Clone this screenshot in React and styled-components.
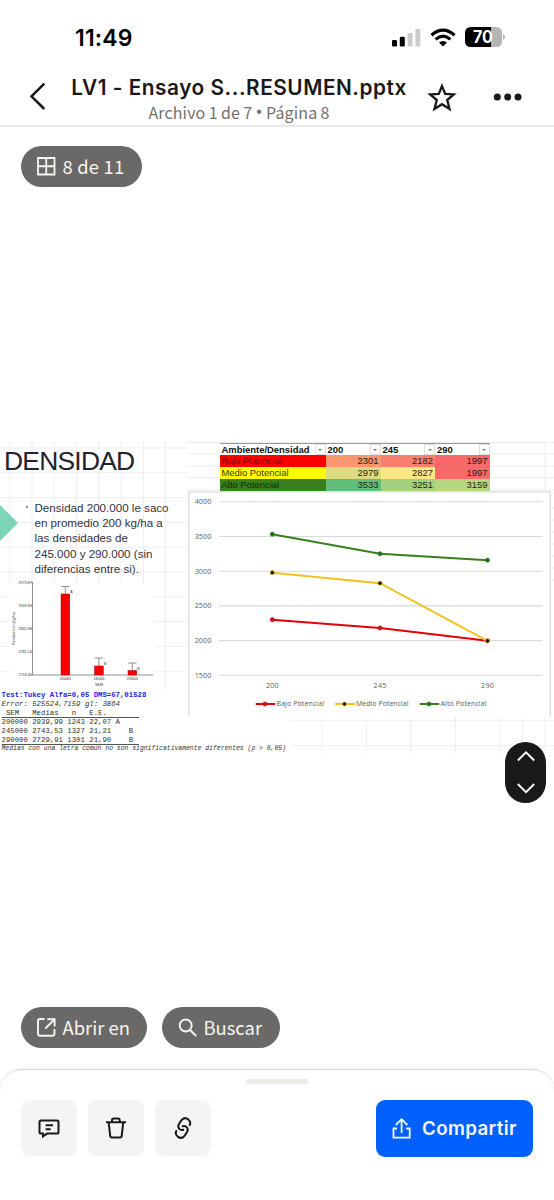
import styled, { createGlobalStyle } from 'styled-components';

const GlobalStyle = createGlobalStyle`
  * {
    box-sizing: border-box;
  }

  body {
    margin: 0;
    background: #fff;
    color: #1a1918;
    font-family: 'Inter', 'Liberation Sans', sans-serif;
  }
`;

const Screen = styled.div`
  position: relative;
  display: flex;
  flex-direction: column;
  width: 554px;
  height: 1200px;
  overflow: hidden;
  background: #fff;
`;

const StatusBar = styled.div`
  display: flex;
  align-items: center;
  justify-content: space-between;
  height: 74px;
  padding: 0 49px 0 75px;
`;

const Clock = styled.span`
  padding-top: 2px;
  font-size: 23px;
  font-weight: 600;
  letter-spacing: 0.15px;
  line-height: 30px;
  color: #000;
`;

const StatusIcons = styled.div`
  display: flex;
  align-items: center;
  gap: 9px;
`;

const NavBar = styled.header`
  display: flex;
  height: 53px;
  border-bottom: 2px solid #e9e9e9;
`;

const BackButton = styled.div`
  width: 70px;
  padding: 8px 0 0 29px;
`;

const TitleBlock = styled.div`
  width: 338px;
  text-align: center;
  white-space: nowrap;
`;

const FileName = styled.div`
  height: 27px;
  font-size: 20.8px;
  font-weight: 600;
  letter-spacing: 0.53px;
  line-height: 28px;
`;

const FileInfo = styled.div`
  display: flex;
  justify-content: center;
  gap: 4px;
  height: 24px;
  font-family: 'Noto Sans CJK SC', sans-serif;
  font-size: 16px;
  letter-spacing: 0.15px;
  word-spacing: -0.5px;
  line-height: 22px;
  color: #73716f;
`;

const Separator = styled.span`
  font-family: 'Liberation Sans', sans-serif;
  letter-spacing: 0;
`;

const NavActions = styled.div`
  display: flex;
  gap: 36px;
  padding: 8px 0 0 19px;
`;

const Viewer = styled.main`
  display: flex;
  flex-direction: column;
  height: 942px;
`;

const PillRow = styled.div`
  display: flex;
  gap: 15px;
  padding-left: 21px;
  margin-top: ${({ $top }) => $top};
`;

const Pill = styled.div`
  display: flex;
  align-items: center;
  width: ${({ $width }) => $width};
  height: 41px;
  padding-left: 16px;
  gap: 6.5px;
  border-radius: 21px;
  background: #6a6967;
  color: #f7f5f2;
  font-family: 'Noto Sans CJK SC', sans-serif;
  font-size: 18.4px;
  letter-spacing: ${({ $spacing }) => $spacing || '0'};
  line-height: 40px;
  white-space: nowrap;

  svg {
    flex: none;
  }
`;

const PillLabel = styled.span`
  height: 41px;
`;

const Slide = styled.section`
  position: relative;
  display: flex;
  height: 312px;
  margin-top: 254px;
  font-family: 'Liberation Sans', sans-serif;
`;

const Backdrop = styled.svg`
  position: absolute;
  inset: 0;
`;

const Notes = styled.div`
  position: relative;
  flex: none;
  width: 188px;
`;

const SlideTitle = styled.h1`
  height: 44px;
  margin: 0;
  padding-left: 4px;
  font-size: 26.4px;
  font-weight: 400;
  letter-spacing: -0.75px;
  line-height: 40px;
  color: #24222c;
`;

const Bullets = styled.ul`
  height: 92px;
  margin: 0;
  padding: 15px 0 0 34.5px;
  list-style: none;
`;

const Bullet = styled.li`
  position: relative;
  font-size: 11.6px;
  line-height: 15.2px;
  color: #33323d;
  white-space: pre;

  &::before {
    content: '';
    position: absolute;
    left: -9px;
    top: 6px;
    width: 2px;
    height: 2px;
    background: #888;
  }
`;

const BarChart = styled.svg`
  display: block;
  height: 113px;
`;

const Stats = styled.div`
  width: 290px;
  height: 63px;
  padding: 0.5px 0 0 1.5px;
  background: #fff;
  font-family: 'Liberation Mono', monospace;
  font-size: 7.32px;
  line-height: 9px;
  color: #333;
  white-space: pre;
`;

const TestLine = styled.div`
  font-weight: 700;
  color: #2822e0;
`;

const ErrorLine = styled.div`
  font-style: italic;
`;

const StatRow = styled.div`
  width: 137px;
  height: 9px;
  border-bottom: ${({ $ruled }) => ($ruled ? '1px solid #555' : 'none')};
`;

const Footnote = styled.div`
  font-size: 6.42px;
  font-style: italic;
  line-height: 8px;
`;

const Results = styled.div`
  position: relative;
  flex: none;
  width: 364px;
`;

const Sheet = styled.div`
  display: grid;
  grid-template-columns: 106px 55px 54.5px 54.5px;
  grid-template-rows: 12px repeat(3, 11.8px);
  width: 270px;
  margin: 2.3px 0 0 31.5px;
  font-size: 9.43px;
  line-height: 12.6px;
`;

const HeadCell = styled.div`
  display: flex;
  justify-content: space-between;
  padding-left: 2px;
  border-top: 1px solid #999;
  background: #fff;
  font-weight: 700;
  line-height: 11.5px;
  color: #111;
`;

const Filter = styled.span`
  display: flex;
  flex: none;
  align-items: center;
  justify-content: center;
  width: 11px;
  border: 1px solid #ddd;

  &::after {
    content: '';
    border: 2px solid transparent;
    border-top: 2px solid #777;
    border-bottom: 0;
  }
`;

const Cell = styled.div`
  padding: 0 2px;
  background: ${({ $bg }) => $bg};
  color: ${({ $color }) => $color || '#2b1a10'};
  text-align: ${({ $align }) => $align || 'right'};
`;

const LineChart = styled.svg`
  display: block;
  margin-top: 0.3px;
`;

const Stepper = styled.div`
  position: absolute;
  left: 505px;
  top: 742px;
  display: flex;
  flex-direction: column;
  align-items: center;
  justify-content: space-between;
  width: 41px;
  height: 61px;
  padding: 8px 0 8px;
  border-radius: 20.5px;
  background: #1a1918;
`;

const BottomSheet = styled.footer`
  height: 131px;
  border-top: 1px solid #d9d9d9;
  border-radius: 22px 22px 0 0;
  background: #fff;
  box-shadow: 0 -1px 3px rgba(0, 0, 0, 0.06);
`;

const Handle = styled.div`
  width: 62px;
  height: 5px;
  margin: 9px auto 0;
  border-radius: 2px;
  background: #edebe6;
`;

const Actions = styled.div`
  display: flex;
  gap: 11px;
  padding: 16px 21px 0;
`;

const IconButton = styled.div`
  display: flex;
  align-items: center;
  justify-content: center;
  width: 56px;
  height: 56px;
  border-radius: 9px;
  background: #f5f4f3;
`;

const ShareButton = styled.div`
  display: flex;
  align-items: center;
  width: 157px;
  height: 57px;
  margin: -0.5px 0 0 auto;
  padding-left: 16px;
  gap: 11px;
  border-radius: 9px;
  background: #0061fe;
  color: #f7f5f2;
  font-size: 18.8px;
  font-weight: 600;
  letter-spacing: 0.35px;
`;

const gridX = [9.8, 32, 54, 76.5, 98.8, 121, 143.5, 165.8, 322, 366.3, 410.8, 455.5, 500, 522.5, 545];
const gridY = [7, 31.8, 56.6, 81.4, 106.2, 131, 155.8, 180.6, 205.4, 230.2, 255, 279.8, 304.6];

const bars = [
  { label: '200000', x: 61, top: 24, error: 16.5, group: 'A' },
  { label: '245000', x: 94.6, top: 96, error: 88, group: 'B' },
  { label: '290000', x: 128, top: 100.5, error: 93, group: 'B' },
];

const barTicks = ['2973,87', '2909,83', '2845,98', '2782,14', '2718,30'];

const rows = [
  { name: 'Bajo Potencial', bg: '#fe0000', color: '#7b0000', values: [[2301, '#f9956f'], [2182, '#f9806f'], [1997, '#f8696b']] },
  { name: 'Medio Potencial', bg: '#ffff00', color: '#38370a', values: [[2979, '#dfda80'], [2827, '#ffe883'], [1997, '#f8696b']] },
  { name: 'Alto Potencial', bg: '#38801f', color: '#0b2c08', values: [[3533, '#63be7b'], [3251, '#a2d07e'], [3159, '#b3d67f']] },
];

const series = [
  { name: 'Alto Potencial', line: '#38801f', dot: '#1e6e2c', values: [3533, 3251, 3159], x: 231.5, width: 46 },
  { name: 'Bajo Potencial', line: '#e3000b', dot: '#a4262c', values: [2301, 2182, 1997], x: 67.5, width: 47.5 },
  { name: 'Medio Potencial', line: '#f2c11d', dot: '#111', values: [2979, 2827, 1997], x: 147, width: 52.5 },
];

const densities = ['200', '245', '290'];
const plotX = [84.3, 192, 299.5];
const plotY = (value) => 184.3 - ((value - 1500) * 34.7) / 500;

const Signal = () => (
  <svg width="29" height="19" viewBox="0 0 29 19">
    <rect x="0" y="12" width="5" height="6.5" rx="1.3" fill="#000" />
    <rect x="7.8" y="8.8" width="5" height="9.7" rx="1.3" fill="#000" />
    <rect x="15.6" y="5" width="5" height="13.5" rx="1.3" fill="#ccc" />
    <rect x="23.4" y="1" width="5" height="17.5" rx="1.3" fill="#ccc" />
  </svg>
);

const Wifi = () => (
  <svg width="26" height="19" viewBox="0 0 26 19" fill="none" stroke="#000" strokeWidth="3.2">
    <path d="M1.5 7.2 Q13 -2.8 24.5 7.2" />
    <path d="M5.6 11.4 Q13 5 20.4 11.4" />
    <path d="M13 18.6 L9 14.6 Q13 11.3 17 14.6 Z" fill="#000" stroke="none" />
  </svg>
);

const Battery = () => (
  <svg width="40" height="20" viewBox="0 0 40 20">
    <path d="M6 0 H26 V20 H6 Q0 20 0 14 V6 Q0 0 6 0Z" fill="#000" />
    <path d="M26 0 H31 Q37 0 37 6 V14 Q37 20 31 20 H26Z" fill="#b5b5b5" />
    <path d="M38 7 Q40 8 40 10 Q40 12 38 13Z" fill="#b5b5b5" />
    <text x="18" y="16.2" textAnchor="middle" fill="#fff" fontFamily="Inter" fontSize="17" fontWeight="700" textLength="20" lengthAdjust="spacingAndGlyphs">70</text>
  </svg>
);

const BarGraph = () => (
  <BarChart width="160" height="113" viewBox="0 0 160 113" fontFamily="Liberation Sans" fontSize="3.6" fill="#333">
    <rect x="9" y="6" width="145" height="107" fill="#fff" />
    <path d="M32.5 6 V99 H153" transform="translate(0 -1)" fill="none" stroke="#777" strokeWidth="0.8" />
    {barTicks.map((tick, i) => (
      <g key={tick}>
        <path d={`M31 ${5.5 + i * 23.1} h2`} stroke="#777" strokeWidth="0.7" />
        <text x="31.5" y={6.8 + i * 23.1} textAnchor="end">{tick}</text>
      </g>
    ))}
    <text transform="translate(15.4 51.5) rotate(-90)" textAnchor="middle" textLength="33">Rendimiento (kg/ha)</text>
    {bars.map((bar) => (
      <g key={bar.label} transform="translate(0 -7)">
        <path d={`M${bar.x + 4.3} ${bar.top} V${bar.error} m-4.2 0 h8.4`} fill="none" stroke="#777" strokeWidth="0.8" />
        <rect x={bar.x} y={bar.top} width="8.7" height={105 - bar.top} fill="#f80000" stroke="#a00000" strokeWidth="0.5" />
        <text x={bar.x + 9.3} y={bar.error + 6.7}>{bar.group}</text>
        <text x={bar.x + 4.3} y="110.3" textAnchor="middle" fontSize="3.3">{bar.label}</text>
      </g>
    ))}
    <text x="99" y="108.7" textAnchor="middle">SEM</text>
  </BarChart>
);

const LineGraph = () => (
  <LineChart width="364" height="226" viewBox="0 0 364 226" fontFamily="Open Sans, sans-serif" fontSize="7.2" fill="#5c5c5c">
    <path d="M0.8 226 V0.8 H362.3 V226 Z" fill="#fff" />
    <path d="M0.8 225.5 V0.8 H362.3 V225.5" fill="none" stroke="#dcdcdc" strokeWidth="1.3" />
    {[4000, 3500, 3000, 2500, 2000, 1500].map((tick) => (
      <g key={tick}>
        <path d={`M31 ${plotY(tick)} H354.5`} stroke="#dadada" strokeWidth="1.1" />
        <text x="6.7" y={plotY(tick) + 2.5} textLength="16.6">{tick}</text>
      </g>
    ))}
    {densities.map((density, i) => (
      <text key={density} x={plotX[i]} y="197.3" textAnchor="middle" textLength="12.8">{density}</text>
    ))}
    {series.map((item) => (
      <g key={item.name}>
        <polyline
          points={item.values.map((value, i) => `${plotX[i]},${plotY(value)}`).join(' ')}
          fill="none"
          stroke={item.line}
          strokeWidth="2"
        />
        {item.values.map((value, i) => (
          <circle key={plotX[i]} cx={plotX[i]} cy={plotY(value)} r="2.1" fill={item.dot} stroke={item.line} strokeWidth="0.7" />
        ))}
        <path d={`M${item.x + 1} 213 h18`} stroke={item.line} strokeWidth="2" strokeLinecap="round" />
        <circle cx={item.x + 9.5} cy="213" r="2.1" fill={item.dot} stroke={item.line} strokeWidth="0.7" />
        <text x={item.x + 21} y="215.4" fontSize="7" textLength={item.width}>{item.name}</text>
      </g>
    ))}
  </LineChart>
);

const App = () => {
  return (
    <>
      <GlobalStyle />
      <Screen>
        <StatusBar>
          <Clock>11:49</Clock>
          <StatusIcons>
            <Signal />
            <Wifi />
            <Battery />
          </StatusIcons>
        </StatusBar>

        <NavBar>
          <BackButton>
            <svg width="18" height="29" viewBox="0 0 18 29" fill="none" stroke="#1a1918" strokeWidth="2.5">
              <path d="M15.3 1.7 L2.5 14.3 L15.3 27" />
            </svg>
          </BackButton>
          <TitleBlock>
            <FileName>LV1 - Ensayo S...RESUMEN.pptx</FileName>
            <FileInfo>
              <span>Archivo 1 de 7</span>
              <Separator>•</Separator>
              <span>Página 8</span>
            </FileInfo>
          </TitleBlock>
          <NavActions>
            <svg width="30" height="30" viewBox="0 0 30 30" fill="none" stroke="#1a1918" strokeWidth="2.3">
              <path d="M15 4.1 L18.2 12 L26.8 12.4 L20.2 18 L22.5 27 L15 22.2 L7.5 27 L9.8 18 L3.2 12.4 L11.8 12 Z" />
            </svg>
            <svg width="30" height="30" viewBox="0 0 30 30" fill="#1a1918">
              <circle cx="4.3" cy="15.1" r="3.5" />
              <circle cx="14.7" cy="15.1" r="3.5" />
              <circle cx="25" cy="15.1" r="3.5" />
            </svg>
          </NavActions>
        </NavBar>

        <Viewer>
          <PillRow $top="19px">
            <Pill $width="121px" $spacing="0.2px">
              <svg width="19" height="19" viewBox="0 0 19 19" fill="none" stroke="#f7f5f2" strokeWidth="1.8">
                <path d="M1 1 H17.5 V17.5 H1 Z M9.25 1 V17.5 M1 9.25 H17.5" />
              </svg>
              <PillLabel>8 de 11</PillLabel>
            </Pill>
          </PillRow>

          <Slide>
            <Backdrop width="554" height="312" viewBox="0 0 554 312">
              {gridX.map((x) => (
                <path key={x} d={`M${x} 0 V312`} stroke="#ededed" strokeWidth="0.9" />
              ))}
              {gridY.map((y) => (
                <path key={y} d={`M0 ${y} H554`} stroke="#ededed" strokeWidth="0.9" />
              ))}
              <path d="M0 64 L18 82 L0 100 Z" fill="#7dd5b9" />
              <rect x="187" y="0" width="367" height="276" fill="#fff" />
              <path d="M187 1.5 H554 M187 13 H554 M187 25 H554 M187 36.8 H554 M187 48.8 H554 M545 0 V50" stroke="#ececec" />
              <path d="M552 67 h2 M552 79 h2 M552 91 h2 M552 103 h2 M552 115 h2 M552 127 h2 M552 139 h2" stroke="#e6e6e6" />
            </Backdrop>

            <Notes>
              <SlideTitle>DENSIDAD</SlideTitle>
              <Bullets>
                <Bullet>
                  {'Densidad 200.000 le saco\nen promedio 200 kg/ha a\nlas densidades de\n245.000 y 290.000 (sin\ndiferencias entre si).'}
                </Bullet>
              </Bullets>
              <BarGraph />
              <Stats>
                <TestLine>Test:Tukey Alfa=0,05 DMS=67,01528</TestLine>
                <ErrorLine>Error: 525524,7159 gl: 3864</ErrorLine>
                <StatRow $ruled>{' SEM   Medias   n   E.E.'}</StatRow>
                <StatRow>200000 2939,99 1243 22,07 A</StatRow>
                <StatRow>{'245000 2743,53 1327 21,21    B'}</StatRow>
                <StatRow $ruled>{'290000 2729,91 1301 21,90    B'}</StatRow>
                <Footnote>{'Medias con una letra común no son significativamente diferentes (p > 0,05)'}</Footnote>
              </Stats>
            </Notes>

            <Results>
              <Sheet>
                <HeadCell>
                  Ambiente/Densidad
                  <Filter />
                </HeadCell>
                {densities.map((density) => (
                  <HeadCell key={density}>
                    {density}
                    <Filter />
                  </HeadCell>
                ))}
                {rows.map((row) => [
                  <Cell key={row.name} $bg={row.bg} $color={row.color} $align="left">{row.name}</Cell>,
                  ...row.values.map(([value, bg], i) => (
                    <Cell key={`${row.name}-${i}`} $bg={bg}>{value}</Cell>
                  )),
                ])}
              </Sheet>
              <LineGraph />
            </Results>
          </Slide>

          <PillRow $top="254px">
            <Pill $width="126px">
              <svg width="19" height="19" viewBox="0 0 19 19" fill="none" stroke="#f7f5f2" strokeWidth="1.9">
                <path d="M7.5 1 H3 Q1 1 1 3 V15.5 Q1 17.7 3 17.7 H15.5 Q17.5 17.7 17.5 15.5 V11" />
                <path d="M10.3 1.2 H17.6 V8.5 M17.2 1.6 L8.3 10.5" />
              </svg>
              <PillLabel>Abrir en</PillLabel>
            </Pill>
            <Pill $width="117.5px">
              <svg width="19" height="19" viewBox="0 0 19 19" fill="none" stroke="#f7f5f2" strokeWidth="1.9">
                <circle cx="7.7" cy="7.5" r="6" />
                <path d="M12 12 L18.2 18" />
              </svg>
              <PillLabel>Buscar</PillLabel>
            </Pill>
          </PillRow>
        </Viewer>

        <BottomSheet>
          <Handle />
          <Actions>
            <IconButton>
              <svg width="24" height="24" viewBox="0 0 24 24" fill="none" stroke="#1a1918" strokeWidth="2">
                <path d="M4 4.5 H20 Q21.5 4.5 21.5 6 V15.9 Q21.5 17.6 20 17.6 H10 L6 20.4 V17.6 H4 Q2.5 17.6 2.5 16 V6 Q2.5 4.5 4 4.5Z" />
                <path d="M8.6 9.2 H16 M8.6 13.2 H13.7" />
              </svg>
            </IconButton>
            <IconButton>
              <svg width="24" height="24" viewBox="0 0 24 24" fill="none" stroke="#1a1918" strokeWidth="2">
                <path d="M2 6.2 H22 M8 6 V4.2 Q8 2.6 9.7 2.6 H14 Q15.7 2.6 15.7 4.2 V6" />
                <path d="M4.7 6.5 L6.2 20 Q6.4 21.4 7.8 21.4 H16.1 Q17.5 21.4 17.7 20 L19.2 6.5" />
              </svg>
            </IconButton>
            <IconButton>
              <svg width="24" height="24" viewBox="0 0 24 24" fill="none" stroke="#1a1918" strokeWidth="2">
                <path d="M18.3 9.8 Q20.6 6.2 17.3 3.4 Q13.4 0.5 10.5 4.2 L8.1 7.8 Q6 11.3 9.1 13.5 Q10.9 14.6 13 13.5" />
                <path d="M5.7 14.2 Q3.4 17.8 6.7 20.6 Q10.6 23.5 13.5 19.8 L15.9 16.2 Q18 12.7 14.9 10.5 Q13.1 9.4 11 10.5" />
              </svg>
            </IconButton>
            <ShareButton>
              <svg width="19" height="23" viewBox="0 0 19 23" fill="none" stroke="#f7f5f2" strokeWidth="1.8">
                <path d="M5 11.5 H1.5 V20.7 H17.7 V11.5 H14.2 M9.6 16 V2.5 M3.8 8 L9.6 2.2 L15.4 8" />
              </svg>
              Compartir
            </ShareButton>
          </Actions>
        </BottomSheet>

        <Stepper>
          <svg width="18" height="13" viewBox="0 0 18 13" fill="none" stroke="#fff" strokeWidth="1.8">
            <path d="M0.8 10.5 L9 2.3 L17.2 10.5" />
          </svg>
          <svg width="18" height="13" viewBox="0 0 18 13" fill="none" stroke="#fff" strokeWidth="1.8">
            <path d="M0.8 2 L9 10.2 L17.2 2" />
          </svg>
        </Stepper>
      </Screen>
    </>
  );
};

export default App;
